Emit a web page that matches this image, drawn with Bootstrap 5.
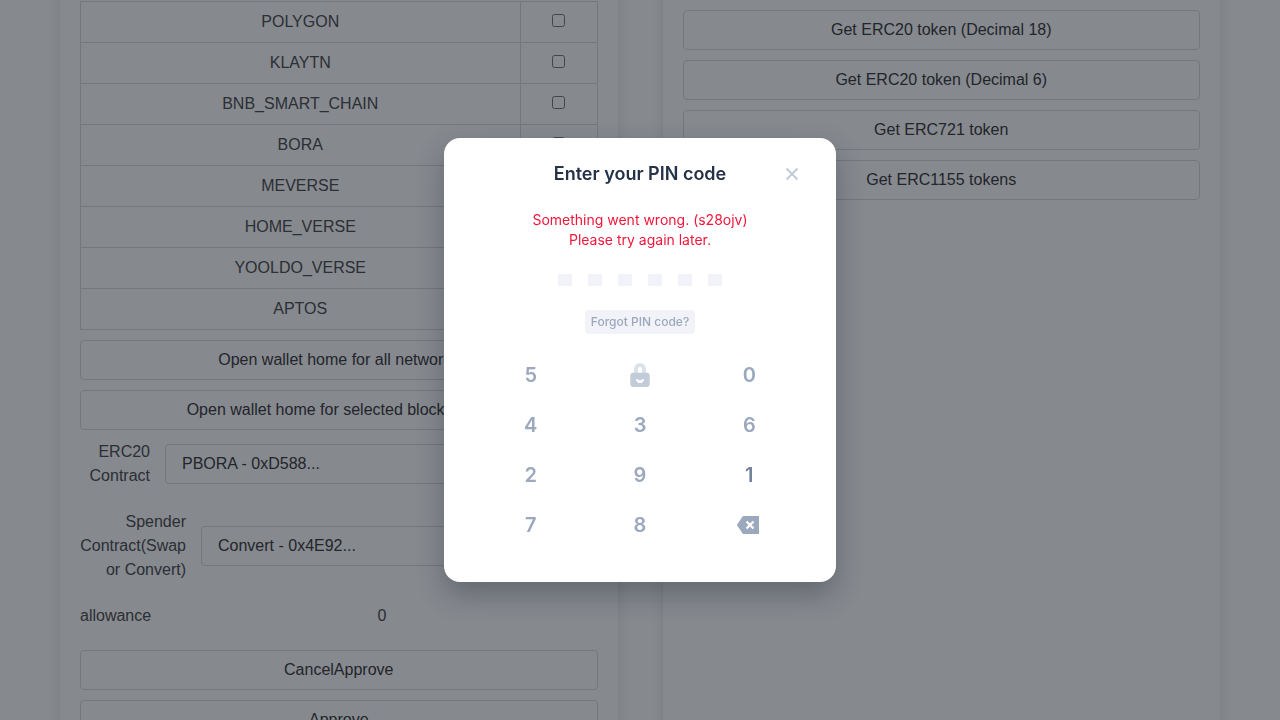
<!DOCTYPE html>
<html lang="en">
<head>
<meta charset="utf-8">
<meta name="viewport" content="width=device-width, initial-scale=1">
<title>Wallet sample</title>
<link href="https://cdn.jsdelivr.net/npm/bootstrap@5.3.0/dist/css/bootstrap.min.css" rel="stylesheet">
<style>
  body { font-family: "Liberation Sans", Arial, sans-serif; font-size: 16px; line-height: 24px; color: #4a4a4a; background: #fff; height: 100vh; overflow: hidden; }
  .page-grid { display: grid; grid-template-columns: 1fr 1fr; gap: 45px; padding: 0 60px; min-height: 100vh; }
  .panel { min-width: 0; margin: -20px 0; padding: 20px; background: #fff; box-shadow: 0 0 15px rgba(10, 10, 10, .1), 0 0 0 1px rgba(10, 10, 10, .02); display: flex; flex-direction: column; gap: 10px; }
  .panel-main { padding-top: 21px; }
  .panel-side { padding-top: 30px; }
  .chains { width: 100%; border-collapse: collapse; table-layout: fixed; text-align: center; }
  .chains td { border: 1px solid #dbdbdb; padding: 8px 12px; height: 41px; }
  .chains .pick { width: 77px; }
  .line-btn, .line-select { height: 40px; border: 1px solid #dbdbdb; border-radius: 4px; background-color: #fff; color: #363636; font-size: 16px; line-height: 24px; padding: 7px 16px; flex-shrink: 0; }
  .line-select { flex: 1 1 0; min-width: 0; }
  .field-row { display: flex; align-items: center; gap: 15px; margin-bottom: 12px; }
  .field-name { flex: 0 0 70px; text-align: right; }
  .field-name.wide { flex-basis: 106px; }
  .shade { position: fixed; inset: 0; background: rgba(13, 19, 29, .5); }
  .modal { font-family: Inter, "Liberation Sans", sans-serif; }
  .pin-dialog { max-width: 392px; }
  .pin-box { border: 0; border-radius: 16px; padding: 24px 32px 32px; box-shadow: 0 12px 28px rgba(19, 28, 43, .3); }
  .pin-title { font-size: 18px; line-height: 24px; font-weight: 600; color: #243147; }
  .pin-head { display: grid; grid-template-columns: 24px 1fr 24px; align-items: center; text-align: center; }
  .bare { border: 0; background: none; padding: 0; color: #9ca8be; display: flex; align-items: center; justify-content: center; }
  .pin-error { font-size: 14px; line-height: 20px; color: #f3163a; margin: 24px 0; text-align: center; }
  .pin-dots { display: flex; justify-content: center; gap: 16px; margin-bottom: 24px; }
  .pin-dots span { width: 14px; height: 12px; border-radius: 1px; background: #f2f3f8; }
  .forgot { height: 24px; padding: 0 6px; border-radius: 4px; background: #f2f3f8; font-size: 12px; line-height: 24px; font-weight: 500; margin: 0 auto 16px; }
  .keypad { display: grid; grid-template-columns: repeat(3, 1fr); grid-auto-rows: 50px; }
  .keypad > * { display: flex; align-items: center; justify-content: center; }
  .keypad .bare { font-size: 20px; line-height: 24px; font-weight: 600; }
  .keypad .pressed { color: #74839d; }
  .keypad .erase { padding-right: 3px; }
</style>
</head>
<body>
<main class="page-grid">
  <section class="panel panel-main">
    <table class="chains">
      <colgroup><col><col class="pick"></colgroup>
      <tbody>
        <tr><td>POLYGON</td><td><input type="checkbox" aria-label="POLYGON"></td></tr>
        <tr><td>KLAYTN</td><td><input type="checkbox" aria-label="KLAYTN"></td></tr>
        <tr><td>BNB_SMART_CHAIN</td><td><input type="checkbox" aria-label="BNB_SMART_CHAIN"></td></tr>
        <tr><td>BORA</td><td><input type="checkbox" aria-label="BORA"></td></tr>
        <tr><td>MEVERSE</td><td><input type="checkbox" aria-label="MEVERSE"></td></tr>
        <tr><td>HOME_VERSE</td><td><input type="checkbox" aria-label="HOME_VERSE"></td></tr>
        <tr><td>YOOLDO_VERSE</td><td><input type="checkbox" aria-label="YOOLDO_VERSE"></td></tr>
        <tr><td>APTOS</td><td><input type="checkbox" aria-label="APTOS"></td></tr>
      </tbody>
    </table>
    <button type="button" class="btn line-btn">Open wallet home for all networks</button>
    <button type="button" class="btn line-btn">Open wallet home for selected blockchains</button>
    <div class="field-row">
      <label class="field-name" for="erc20">ERC20 Contract</label>
      <select class="form-select line-select" id="erc20"><option>PBORA - 0xD588...</option></select>
    </div>
    <div class="field-row">
      <label class="field-name wide" for="spender">Spender Contract(Swap or Convert)</label>
      <select class="form-select line-select" id="spender"><option>Convert - 0x4E92...</option></select>
    </div>
    <div class="field-row">
      <span class="field-name">allowance</span>
      <span class="flex-fill text-center">0</span>
    </div>
    <button type="button" class="btn line-btn">CancelApprove</button>
    <button type="button" class="btn line-btn">Approve</button>
  </section>
  <section class="panel panel-side">
    <button type="button" class="btn line-btn">Get ERC20 token (Decimal 18)</button>
    <button type="button" class="btn line-btn">Get ERC20 token (Decimal 6)</button>
    <button type="button" class="btn line-btn">Get ERC721 token</button>
    <button type="button" class="btn line-btn">Get ERC1155 tokens</button>
  </section>
</main>

<div class="shade"></div>
<div class="modal d-block" role="dialog" aria-modal="true" aria-labelledby="pin-title">
  <div class="modal-dialog modal-dialog-centered pin-dialog">
    <div class="modal-content pin-box">
      <div class="pin-head">
        <span></span>
        <h1 class="pin-title m-0" id="pin-title">Enter your PIN code</h1>
        <button type="button" class="bare" aria-label="Close">
          <svg width="24" height="24" viewBox="0 0 24 24" fill="none" stroke="#c2ccd8" stroke-width="2"><path d="M6.500 6.500l11 11M17.500 6.500l-11 11"/></svg>
        </button>
      </div>
      <p class="pin-error">Something went wrong. (s28ojv)<br>Please try again later.</p>
      <div class="pin-dots"><span></span><span></span><span></span><span></span><span></span><span></span></div>
      <button type="button" class="bare forgot">Forgot PIN code?</button>
      <div class="keypad">
        <button type="button" class="bare">5</button>
        <span>
          <svg width="20" height="24" viewBox="0 0 20 24" fill="none"><path d="M6 12V6a4 4 0 0 1 8 0v6" stroke="#dce2e9" stroke-width="4"/><rect x=".3" y="9.800" width="19.400" height="14.200" rx="3" fill="#c2ccd8"/><path d="M6 16.200q1.200-.6 2 .2 2 1.200 4 0 .8-.8 2-.2c0 2.400-1.800 3.900-4 3.900s-4-1.500-4-3.900z" fill="#fff"/></svg>
        </span>
        <button type="button" class="bare">0</button>
        <button type="button" class="bare">4</button>
        <button type="button" class="bare">3</button>
        <button type="button" class="bare">6</button>
        <button type="button" class="bare">2</button>
        <button type="button" class="bare">9</button>
        <button type="button" class="bare pressed">1</button>
        <button type="button" class="bare">7</button>
        <button type="button" class="bare">8</button>
        <button type="button" class="bare erase" aria-label="Delete">
          <svg width="22" height="18" viewBox="0 0 22 18"><path d="M6 0h15.500a.5.5 0 0 1 .5.5v17a.5.5 0 0 1-.5.5H6L.3 9.700a1.200 1.200 0 0 1 0-1.400z" fill="#9ca8be"/><path d="M9.500 5.500l7 7M16.500 5.500l-7 7" stroke="#fff" stroke-width="2.300"/></svg>
        </button>
      </div>
    </div>
  </div>
</div>
<script src="https://cdn.jsdelivr.net/npm/bootstrap@5.3.0/dist/js/bootstrap.bundle.min.js"></script>
</body>
</html>
